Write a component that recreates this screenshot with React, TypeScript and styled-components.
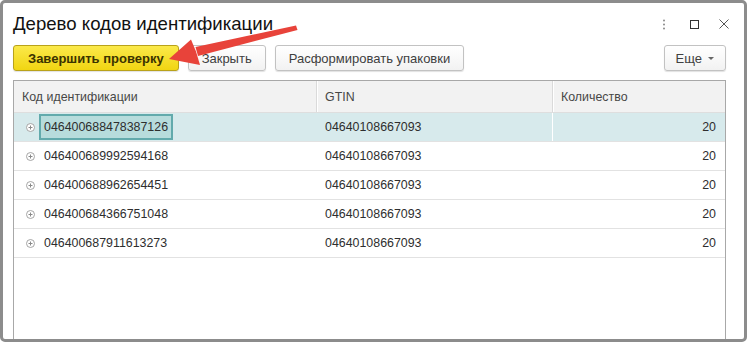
import React from 'react'
import styled, { createGlobalStyle } from 'styled-components'

const GlobalStyle = createGlobalStyle`
  html, body {
    margin: 0;
    padding: 0;
    background: #ffffff;
  }
  body {
    font-family: 'Liberation Sans', Arial, sans-serif;
  }
`

type Row = {
  code: string
  gtin: string
  qty: number
}

const rows: Row[] = [
  { code: '046400688478387126', gtin: '04640108667093', qty: 20 },
  { code: '046400689992594168', gtin: '04640108667093', qty: 20 },
  { code: '046400688962654451', gtin: '04640108667093', qty: 20 },
  { code: '046400684366751048', gtin: '04640108667093', qty: 20 },
  { code: '046400687911613273', gtin: '04640108667093', qty: 20 },
]

const COLUMNS = '302px 236px 1fr'

export default function App() {
  return (
    <>
      <GlobalStyle />
      <Window>
        <TitleBar>
          <Title>Дерево кодов идентификации</Title>
          <WindowControls>
            <ControlButton aria-label="menu">
              <svg width="4" height="11" viewBox="0 0 4 11">
                <circle cx="2" cy="1.5" r="1" fill="#8a8a8a" />
                <circle cx="2" cy="5.5" r="1" fill="#8a8a8a" />
                <circle cx="2" cy="9.5" r="1" fill="#8a8a8a" />
              </svg>
            </ControlButton>
            <ControlButton aria-label="maximize">
              <svg width="9" height="9" viewBox="0 0 9 9">
                <rect x="0.5" y="0.5" width="8" height="8" fill="none" stroke="#333" strokeWidth="1" />
              </svg>
            </ControlButton>
            <ControlButton aria-label="close">
              <svg width="10" height="10" viewBox="0 0 10 10">
                <path d="M0.5 0.5 L9.5 9.5 M9.5 0.5 L0.5 9.5" stroke="#555" strokeWidth="1" />
              </svg>
            </ControlButton>
          </WindowControls>
        </TitleBar>

        <Toolbar>
          <Button $primary>Завершить проверку</Button>
          <Button>Закрыть</Button>
          <Button>Расформировать упаковки</Button>
          <Spacer />
          <Button $compact>
            Еще
            <Caret />
          </Button>
        </Toolbar>

        <Table>
          <HeaderRow>
            <HeaderCell>Код идентификации</HeaderCell>
            <HeaderCell>GTIN</HeaderCell>
            <HeaderCell>Количество</HeaderCell>
          </HeaderRow>
          {rows.map((row, i) => (
            <DataRow key={row.code} $selected={i === 0}>
              <Cell>
                <TreeIcon viewBox="0 0 9 9">
                  <circle cx="4.5" cy="4.5" r="4" fill="#fff" stroke="#a5a5a5" />
                  <path d="M2.5 4.5 H6.5 M4.5 2.5 V6.5" stroke="#8a8a8a" strokeWidth="1" />
                </TreeIcon>
                <CodeText $focused={i === 0}>{row.code}</CodeText>
              </Cell>
              <Cell>{row.gtin}</Cell>
              <Cell $align="right" $divider={i === 0}>
                {row.qty}
              </Cell>
            </DataRow>
          ))}
        </Table>

        <Pointer width="748" height="342" viewBox="0 0 748 342">
          <polygon points="296,25.5 297.5,30 198,56 195.5,47" fill="#e8433a" />
          <polygon points="169,59 191,39.5 196,51.5 200,65" fill="#e8433a" />
        </Pointer>
      </Window>
    </>
  )
}

const Window = styled.div`
  position: relative;
  box-sizing: border-box;
  width: 747px;
  height: 342px;
  border: 3px solid #8c8c8c;
  border-radius: 5px;
  background: #fff;
  display: flex;
  flex-direction: column;
  padding: 0 18px 0 10px;
  overflow: hidden;
`

const TitleBar = styled.div`
  display: flex;
  align-items: center;
  height: 38px;
  padding-top: 2px;
`

const Title = styled.h1`
  margin: 0;
  flex: 1;
  font-size: 18.6px;
  font-weight: normal;
  color: #111;
`

const WindowControls = styled.div`
  display: flex;
  align-items: center;
  gap: 20px;
  margin-right: -3px;
`

const ControlButton = styled.span`
  display: flex;
  align-items: center;
  justify-content: center;
  width: 10px;
  height: 14px;
`

const Toolbar = styled.div`
  display: flex;
  align-items: center;
  gap: 9px;
  height: 26px;
  margin-top: 2px;
`

const Spacer = styled.div`
  flex: 1;
`

const Button = styled.button<{ $primary?: boolean; $compact?: boolean }>`
  box-sizing: border-box;
  height: 26px;
  display: flex;
  align-items: center;
  gap: 6px;
  padding: 0 ${(p) => (p.$primary ? '14px' : p.$compact ? '11px' : '13px')};
  font-family: 'Liberation Sans', Arial, sans-serif;
  font-size: 13px;
  font-weight: ${(p) => (p.$primary ? 'bold' : 'normal')};
  color: ${(p) => (p.$primary ? '#3b3300' : '#404040')};
  border: 1px solid ${(p) => (p.$primary ? '#b9a21a' : '#c2c2c2')};
  border-radius: 3px;
  background: ${(p) =>
    p.$primary
      ? 'linear-gradient(#fbe94a, #f1d512)'
      : 'linear-gradient(#ffffff, #f2f2f2)'};
  box-shadow: 0 1px 1px rgba(0, 0, 0, 0.12);
  cursor: pointer;
`

const Caret = styled.span`
  width: 0;
  height: 0;
  border-left: 3px solid transparent;
  border-right: 3px solid transparent;
  border-top: 3px solid #666;
  margin-top: 1px;
`

const Table = styled.div`
  flex: 1;
  margin-top: 9px;
  border: 1px solid #a8a8a8;
  border-bottom: none;
  display: flex;
  flex-direction: column;
  color: #2e2e2e;
  font-size: 12.4px;
`

const HeaderRow = styled.div`
  display: grid;
  grid-template-columns: ${COLUMNS};
  height: 31px;
  background: #f2f2f2;
  border-bottom: 1px solid #dedede;
`

const HeaderCell = styled.div`
  display: flex;
  align-items: center;
  padding-left: 8px;
  color: #474747;
  & + & {
    border-left: 1px solid #dadada;
    box-shadow: inset 1px 0 0 #ffffff;
  }
`

const DataRow = styled.div<{ $selected?: boolean }>`
  display: grid;
  grid-template-columns: ${COLUMNS};
  height: 28px;
  border-bottom: 1px solid #e2e2e2;
  background: ${(p) => (p.$selected ? '#d7eaec' : '#ffffff')};
`

const Cell = styled.div<{ $align?: 'left' | 'right'; $divider?: boolean }>`
  display: flex;
  align-items: center;
  justify-content: ${(p) => (p.$align === 'right' ? 'flex-end' : 'flex-start')};
  padding: ${(p) => (p.$align === 'right' ? '0 9px 0 0' : '0 0 0 8px')};
  border-left: 1px solid ${(p) => (p.$divider ? '#ffffff' : 'transparent')};
  &:first-child {
    border-left: none;
  }
`

const TreeIcon = styled.svg`
  width: 9px;
  height: 9px;
  margin-left: 4px;
  margin-right: 4px;
  flex-shrink: 0;
`

const CodeText = styled.span<{ $focused?: boolean }>`
  box-sizing: border-box;
  display: flex;
  align-items: center;
  height: 26px;
  padding: 0 ${(p) => (p.$focused ? '3px' : '5px')};
  border: ${(p) => (p.$focused ? '2px solid #62aaac' : 'none')};
  background: ${(p) => (p.$focused ? '#b7dcdc' : 'transparent')};
`

const Pointer = styled.svg`
  position: absolute;
  left: -3px;
  top: -3px;
  pointer-events: none;
`
